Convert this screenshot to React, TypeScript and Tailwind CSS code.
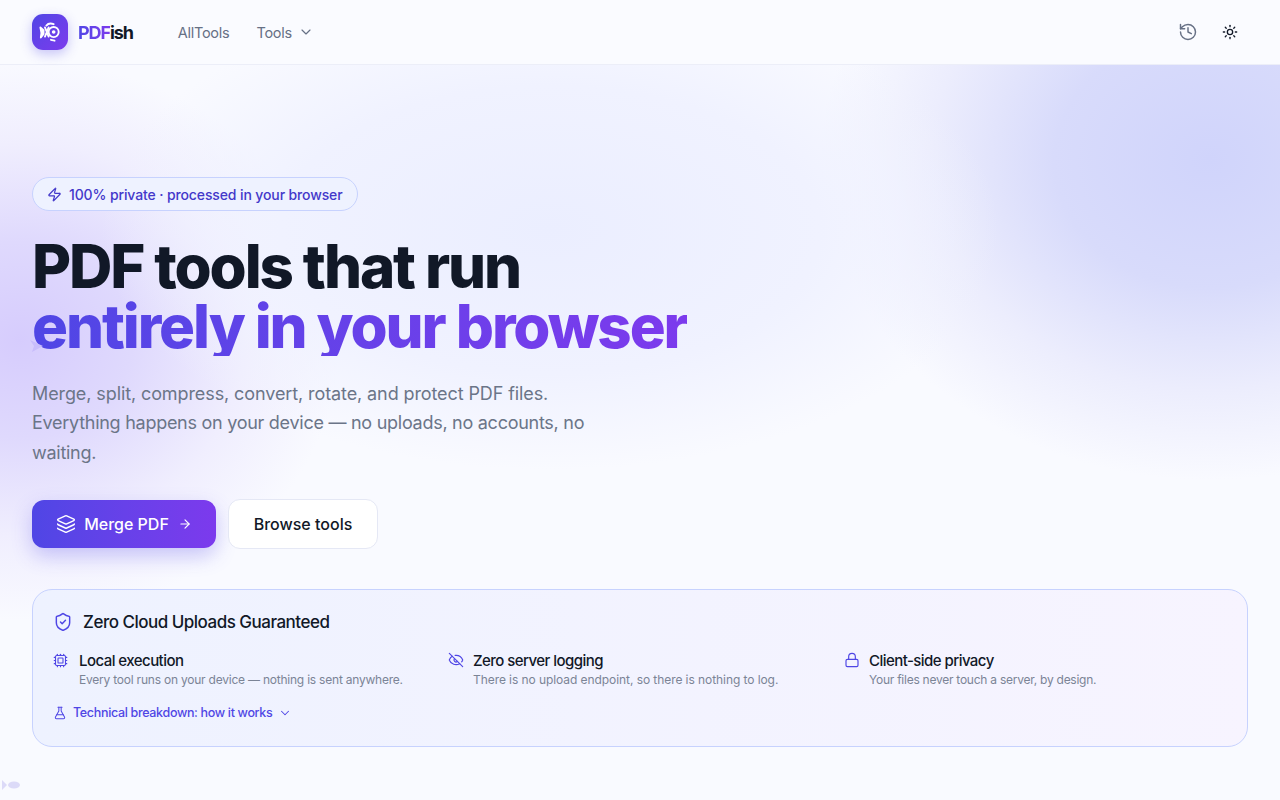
import { History, Sun, ChevronDown, Zap, Layers, ArrowRight, ShieldCheck, Cpu, EyeOff, Lock, FlaskConical } from "lucide-react";

function Fish({ className }: { className?: string }) {
  return (
    <svg viewBox="0 0 24 24" className={className} fill="none" stroke="white" strokeWidth="2" strokeLinecap="round" strokeLinejoin="round">
      <path d="M1.500 7 L5 10 L5 14 L2 18 C3 14 2.800 11 1.500 7 Z" fill="white" />
      <path d="M6.500 7 L10.500 17 M10.500 7 L6.500 17" />
      <circle cx="16" cy="12" r="5.500" />
      <circle cx="16" cy="12" r="1" fill="white" />
      <path d="M8 5 C10 2.500 13 2.300 16 3.500 M13 20.500 L17 21.500" />
    </svg>
  );
}

function Feature({ icon, title, desc, width, descClass, gap }: { icon: React.ReactNode; title: string; desc: string; width: string; descClass: string; gap: string }) {
  return (
    <div className={`flex ${gap} ${width}`}>
      <div className="mt-[1px] shrink-0 text-[#4f46e5]">{icon}</div>
      <div>
        <div className="text-[15px] leading-[20px] font-medium tracking-[-0.55px] text-[#111827]">{title}</div>
        <div className={`text-[12px] leading-[18px] text-[#7b8496] ${descClass}`}>{desc}</div>
      </div>
    </div>
  );
}

export default function App() {
  return (
    <div className="relative h-[800px] w-[1280px] overflow-hidden bg-[#f9faff] font-['Inter','Liberation_Sans',sans-serif]">
      <div className="absolute left-[-300px] top-[60px] h-[560px] w-[640px] rounded-full bg-[radial-gradient(closest-side,#d6ccfd_0%,#dfd9fd_35%,#f0eefe_70%,transparent_100%)]" />
      <div className="absolute left-[820px] top-[-160px] h-[640px] w-[780px] rounded-full bg-[radial-gradient(closest-side,#d0d4fb_0%,#d8dbfb_40%,#ecedfd_72%,transparent_100%)]" />
      <div className="absolute left-[100px] top-[-10px] h-[480px] w-[900px] rounded-full bg-[radial-gradient(closest-side,#ebeeff_0%,#f0f2ff_60%,transparent_100%)]" />

      <header className="relative flex h-[65px] items-center justify-between border-b border-[#eceef8] bg-[#fafbff] px-8">
        <div className="flex items-center">
          <div className="flex h-9 w-9 items-center justify-center rounded-[11px] bg-gradient-to-br from-[#4f46e5] to-[#7c3aed] shadow-[0_4px_12px_rgba(79,70,229,0.3)]">
            <Fish className="h-[22px] w-[22px]" />
          </div>
          <div className="ml-[10px] text-[18px] font-bold tracking-[-1.1px]">
            <span className="bg-gradient-to-r from-[#4f46e5] to-[#7c3aed] bg-clip-text text-transparent">PDF</span>
            <span className="text-[#111827]">ish</span>
          </div>
          <nav className="ml-[45px] flex items-center text-[14.500px] tracking-[-0.25px] text-[#667085]">
            <span className="pt-[2px] [word-spacing:-4px]">All Tools</span>
            <span className="ml-[27px] pt-[2px]">Tools</span>
            <ChevronDown className="ml-[6px] h-4 w-4" strokeWidth={1.75} />
          </nav>
        </div>
        <div className="flex items-center gap-[24px] pr-[10px]">
          <History className="h-5 w-5 text-[#667085]" strokeWidth={1.75} />
          <Sun className="h-4 w-4 text-[#111827]" strokeWidth={2} />
        </div>
      </header>

      <main className="relative px-8 pt-[112px]">
        <div className="inline-flex h-[34px] items-center gap-[7px] rounded-full border border-[#c7d2fe] bg-[#eef2ff] px-[14px] text-[14px] font-medium tracking-[-0.12px] text-[#4338ca]">
          <Zap className="h-[15px] w-[15px]" strokeWidth={2} />
          <span>100% private · processed in your browser</span>
        </div>

        <h1 className="relative mt-[25px] text-[60px] leading-[60px] font-extrabold tracking-[-2.100px] text-[#111827]">
          <div>PDF tools that run</div>
          <div className="w-fit bg-gradient-to-r from-[#4f46e5] to-[#7c3aed] bg-clip-text text-transparent">entirely in your browser</div>
          <svg viewBox="0 0 14 14" className="absolute left-[-2px] top-[103px] h-[14px] w-[14px]">
            <path d="M0 1 L13 7 L2 13 L4 7 Z" fill="#c8bdfb" />
          </svg>
        </h1>

        <p className="mt-[23px] max-w-[576px] text-[18px] leading-[29.250px] tracking-[-0.1px] text-[#6b7588]">
          <span>Merge, split, compress, convert, rotate, and protect PDF files. </span>
          <span className="tracking-[-0.27px]">Everything happens on your device — no uploads, no accounts, no waiting.</span>
        </p>

        <div className="mt-[32px] flex items-center gap-3">
          <button className="flex h-12 w-[184px] items-center justify-center gap-2 rounded-xl bg-gradient-to-r from-[#4f46e5] to-[#7c3aed] text-[16px] font-medium text-white shadow-[0_8px_20px_rgba(79,70,229,0.28)]">
            <Layers className="h-5 w-5" strokeWidth={1.75} />
            <span>Merge PDF</span>
            <ArrowRight className="ml-[1px] h-[14px] w-[14px]" strokeWidth={2} />
          </button>
          <button className="h-[50px] w-[150px] rounded-xl border border-[#e5e8f5] bg-white text-[16px] font-medium text-[#111827]">
            Browse tools
          </button>
        </div>

        <section className="mt-[40px] h-[158px] w-[1216px] rounded-[20px] border border-[#c7d2fe] bg-gradient-to-r from-[#eef2ff] to-[#f7f4ff] px-5 pt-[22px]">
          <div className="flex items-center gap-[10px]">
            <ShieldCheck className="h-5 w-5 text-[#4f46e5]" strokeWidth={1.75} />
            <h2 className="text-[17px] leading-[20px] font-medium tracking-[-0.5px] text-[#111827]">Zero Cloud Uploads Guaranteed</h2>
          </div>
          <div className="mt-[19px] flex">
            <Feature width="w-[395px]" gap="gap-[11px]" descClass="tracking-[-0.22px]" icon={<Cpu className="mt-[1px] h-[15px] w-[15px]" strokeWidth={1.75} />} title="Local execution" desc="Every tool runs on your device — nothing is sent anywhere." />
            <Feature width="w-[396px]" gap="gap-[9px]" descClass="tracking-[-0.07px]" icon={<EyeOff className="h-4 w-4" strokeWidth={1.75} />} title="Zero server logging" desc="There is no upload endpoint, so there is nothing to log." />
            <Feature width="w-[380px]" gap="gap-[9px]" descClass="tracking-[-0.25px]" icon={<Lock className="h-4 w-4" strokeWidth={1.75} />} title="Client-side privacy" desc="Your files never touch a server, by design." />
          </div>
          <div className="mt-[16px] flex items-center text-[12.500px] leading-[16px] font-medium tracking-[-0.33px] text-[#4f46e5]">
            <FlaskConical className="mr-[6px] h-[14px] w-[14px]" strokeWidth={1.75} />
            <span>Technical breakdown: how it works</span>
            <ChevronDown className="ml-[6px] h-[14px] w-[14px]" strokeWidth={1.75} />
          </div>
        </section>
      </main>

      <svg viewBox="0 0 18 10" className="absolute left-[2px] top-[780px] h-[10px] w-[18px]">
        <path d="M0 0 L5 5 L0 10 Z" fill="#dcdaf8" />
        <ellipse cx="12" cy="5" rx="6" ry="3.500" fill="#dcdaf8" />
      </svg>
    </div>
  );
}
